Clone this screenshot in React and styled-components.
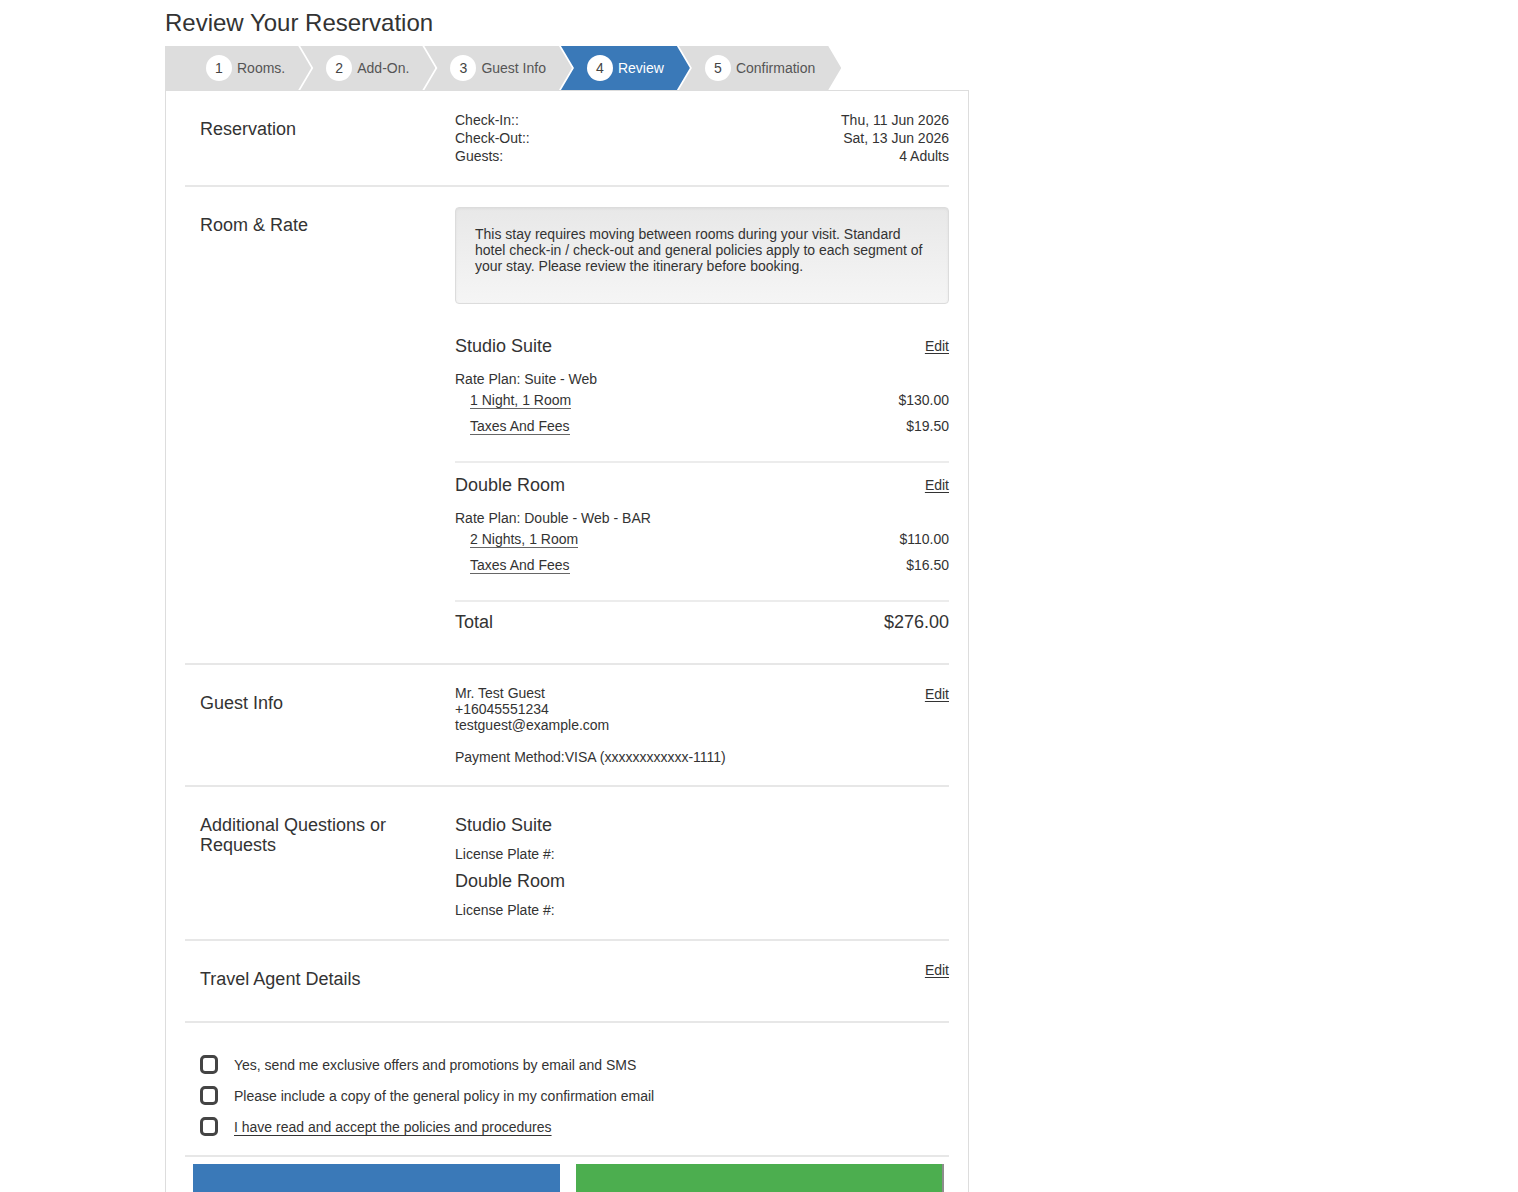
import styled, { createGlobalStyle } from 'styled-components';

const GlobalStyle = createGlobalStyle`
  body {
    margin: 0;
    font-family: "Liberation Sans", Arial, sans-serif;
    font-size: 14px;
    color: #333;
    background: #fff;
  }
  * { box-sizing: border-box; }
`;

const Viewport = styled.div`
  height: 100vh;
  overflow: scroll;

  &::-webkit-scrollbar {
    width: 15px;
    height: 15px;
    background: #f9f9f9;
  }
  &::-webkit-scrollbar-thumb {
    background: #8c8c8c;
    border: 3px solid #f9f9f9;
    border-radius: 8px;
  }
  &::-webkit-scrollbar-corner {
    background: #f9f9f9;
  }
`;

const Page = styled.div`
  width: 1535px;
  min-height: 1630px;
  padding-left: 165px;
`;

const Title = styled.h1`
  margin: 0;
  height: 46px;
  line-height: 46px;
  font-size: 24px;
  font-weight: normal;
  color: #333;
`;

const Steps = styled.div`
  display: flex;
  height: 44px;
`;

const Step = styled.div`
  display: flex;
  align-items: center;
  gap: 5px;
  height: 44px;
  padding: 0 26px 0 ${(p) => (p.$first ? '41px' : '26px')};
  margin-left: ${(p) => (p.$first ? '0' : '-11px')};
  background: ${(p) => (p.$active ? '#3a79b8' : '#dddddd')};
  color: ${(p) => (p.$active ? '#fff' : '#555')};
  clip-path: ${(p) =>
    p.$first
      ? 'polygon(0 0, calc(100% - 13px) 0, 100% 50%, calc(100% - 13px) 100%, 0 100%)'
      : 'polygon(0 0, calc(100% - 13px) 0, 100% 50%, calc(100% - 13px) 100%, 0 100%, 13px 50%)'};
  font-size: 14px;
  white-space: nowrap;
`;

const StepNum = styled.span`
  display: flex;
  align-items: center;
  justify-content: center;
  width: 26px;
  height: 26px;
  border-radius: 50%;
  background: #fff;
  color: #444;
  font-size: 14px;
`;

const Card = styled.div`
  width: 804px;
  border: 1px solid #ddd;
  border-bottom: none;
  padding: 0 19px;
`;

const Row = styled.div`
  display: grid;
  grid-template-columns: 270px 1fr;
  padding: 20px 0;
  border-bottom: 2px solid #e7e7e7;
`;

const Label = styled.div`
  padding: 8px 0 0 15px;
  font-size: 18px;
  line-height: 20px;
  color: #333;
`;

const Content = styled.div`
  min-height: ${(p) => p.$minHeight || 0}px;
`;

const DetailGrid = styled.div`
  display: grid;
  grid-template-columns: 1fr auto;
  line-height: 18px;
`;

const Right = styled.div`
  text-align: right;
`;

const Notice = styled.div`
  padding: 18px 19px 29px;
  margin-bottom: 20px;
  border: 1px solid #dcdcdc;
  border-radius: 4px;
  background: linear-gradient(to bottom, #e8e8e8 0%, #f5f5f5 100%);
  box-shadow: inset 0 1px 3px rgba(0, 0, 0, 0.05);
  line-height: 16px;
`;

const Segment = styled.div`
  padding: 12px 0 22px;
  border-bottom: 2px solid #ececec;
`;

const SegmentHead = styled.div`
  display: flex;
  justify-content: space-between;
  align-items: center;
  height: 20px;
`;

const SegmentTitle = styled.div`
  font-size: 18px;
  line-height: 20px;
`;

const EditLink = styled.a`
  color: #333;
  font-size: 14px;
  line-height: 18px;
  text-decoration: underline;
  text-underline-offset: 2px;
  cursor: pointer;
`;

const RatePlan = styled.div`
  margin-top: 15px;
  line-height: 16px;
`;

const Item = styled.div`
  display: flex;
  justify-content: space-between;
  align-items: center;
  height: 26px;
  padding-left: 15px;
`;

const ItemLink = styled.span`
  line-height: 16px;
  border-bottom: 1px solid #666;
`;

const TotalRow = styled.div`
  display: flex;
  justify-content: space-between;
  padding: 10px 0 11px;
  font-size: 18px;
  line-height: 20px;
`;

const SplitLine = styled.div`
  display: flex;
  justify-content: space-between;
  align-items: flex-start;
`;

const Lines = styled.div`
  line-height: 16px;
`;

const Payment = styled.div`
  margin-top: 16px;
  line-height: 16px;
`;

const QuestionTitle = styled.div`
  margin: 8px 0 10px;
  font-size: 18px;
  line-height: 20px;
`;

const QuestionText = styled.div`
  line-height: 18px;
`;

const Options = styled.div`
  padding: 26px 0 13px 15px;
  border-bottom: 2px solid #e7e7e7;
`;

const Option = styled.label`
  display: flex;
  align-items: center;
  gap: 16px;
  height: 31px;
  cursor: pointer;
`;

const Box = styled.span`
  width: 18px;
  height: 19px;
  border: 3px solid #444;
  border-radius: 5px;
  flex: none;
`;

const OptionText = styled.span`
  text-decoration: ${(p) => (p.$link ? 'underline' : 'none')};
  text-underline-offset: 3px;
`;

const Actions = styled.div`
  display: flex;
  gap: 16px;
  padding: 7px 7px 20px 8px;
`;

const Button = styled.button`
  flex: 1;
  height: 46px;
  border: none;
  background: ${(p) => (p.$variant === 'green' ? '#4cae4f' : '#3a79b8')};
  box-shadow: ${(p) => (p.$variant === 'green' ? '2px 0 0 #8d8d8d' : 'none')};
  cursor: pointer;
`;

const steps = ['Rooms.', 'Add-On.', 'Guest Info', 'Review', 'Confirmation'];

const segments = [
  {
    name: 'Studio Suite',
    plan: 'Rate Plan: Suite - Web',
    items: [
      ['1 Night, 1 Room', '$130.00'],
      ['Taxes And Fees', '$19.50'],
    ],
  },
  {
    name: 'Double Room',
    plan: 'Rate Plan: Double - Web - BAR',
    items: [
      ['2 Nights, 1 Room', '$110.00'],
      ['Taxes And Fees', '$16.50'],
    ],
  },
];

export default function App() {
  return (
    <>
      <GlobalStyle />
      <Viewport>
        <Page>
          <Title>Review Your Reservation</Title>
          <Steps>
            {steps.map((s, i) => (
              <Step key={s} $first={i === 0} $active={i === 3}>
                <StepNum>{i + 1}</StepNum>
                {s}
              </Step>
            ))}
          </Steps>
          <Card>
            <Row>
              <Label>Reservation</Label>
              <DetailGrid>
                <div>Check-In::</div>
                <Right>Thu, 11 Jun 2026</Right>
                <div>Check-Out::</div>
                <Right>Sat, 13 Jun 2026</Right>
                <div>Guests:</div>
                <Right>4 Adults</Right>
              </DetailGrid>
            </Row>

            <Row>
              <Label>Room &amp; Rate</Label>
              <Content>
                <Notice>
                  This stay requires moving between rooms during your visit. Standard hotel
                  check-in / check-out and general policies apply to each segment of your stay.
                  Please review the itinerary before booking.
                </Notice>
                {segments.map((seg) => (
                  <Segment key={seg.name}>
                    <SegmentHead>
                      <SegmentTitle>{seg.name}</SegmentTitle>
                      <EditLink>Edit</EditLink>
                    </SegmentHead>
                    <RatePlan>{seg.plan}</RatePlan>
                    {seg.items.map(([label, price]) => (
                      <Item key={label}>
                        <ItemLink>{label}</ItemLink>
                        <span>{price}</span>
                      </Item>
                    ))}
                  </Segment>
                ))}
                <TotalRow>
                  <span>Total</span>
                  <span>$276.00</span>
                </TotalRow>
              </Content>
            </Row>

            <Row>
              <Label>Guest Info</Label>
              <Content>
                <SplitLine>
                  <Lines>
                    <div>Mr. Test Guest</div>
                    <div>+16045551234</div>
                    <div>testguest@example.com</div>
                  </Lines>
                  <EditLink>Edit</EditLink>
                </SplitLine>
                <Payment>Payment Method:VISA (xxxxxxxxxxxx-1111)</Payment>
              </Content>
            </Row>

            <Row>
              <Label>Additional Questions or Requests</Label>
              <Content>
                <QuestionTitle>Studio Suite</QuestionTitle>
                <QuestionText>License Plate #:</QuestionText>
                <QuestionTitle>Double Room</QuestionTitle>
                <QuestionText>License Plate #:</QuestionText>
              </Content>
            </Row>

            <Row>
              <Label>Travel Agent Details</Label>
              <Content $minHeight={40}>
                <SplitLine>
                  <span />
                  <EditLink>Edit</EditLink>
                </SplitLine>
              </Content>
            </Row>

            <Options>
              <Option>
                <Box />
                <OptionText>Yes, send me exclusive offers and promotions by email and SMS</OptionText>
              </Option>
              <Option>
                <Box />
                <OptionText>Please include a copy of the general policy in my confirmation email</OptionText>
              </Option>
              <Option>
                <Box />
                <OptionText $link>I have read and accept the policies and procedures</OptionText>
              </Option>
            </Options>

            <Actions>
              <Button aria-label="Back" />
              <Button $variant="green" aria-label="Book" />
            </Actions>
          </Card>
        </Page>
      </Viewport>
    </>
  );
}
